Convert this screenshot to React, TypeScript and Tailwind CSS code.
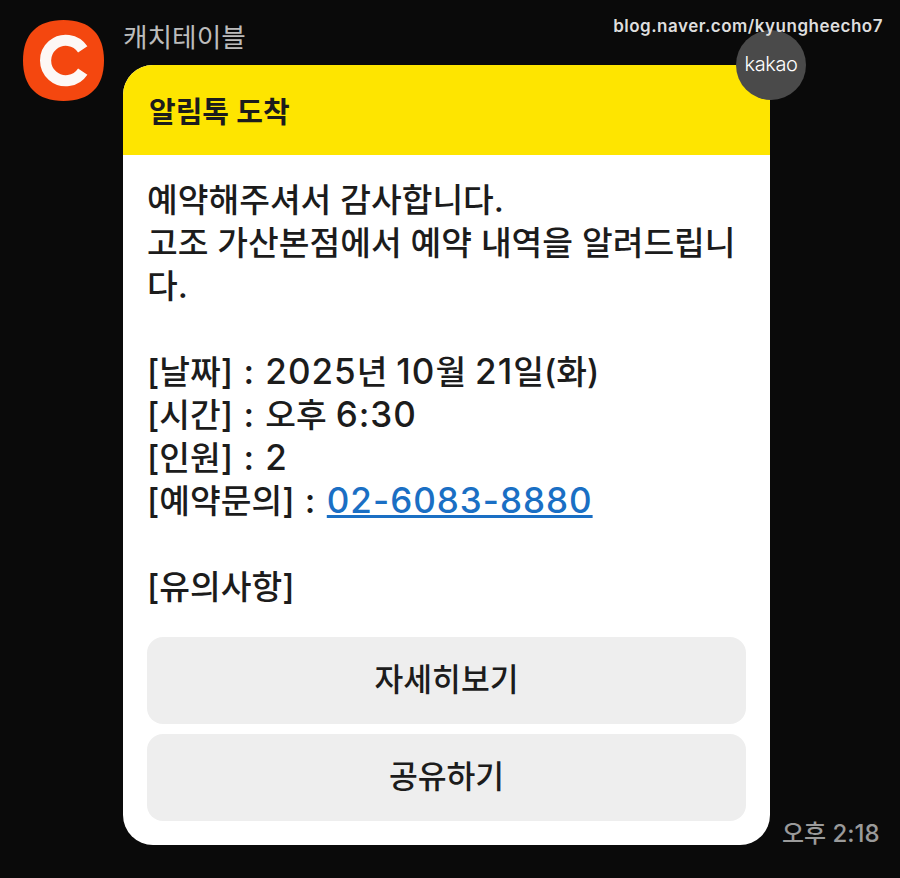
const font = "font-['Inter','Noto_Sans_CJK_KR',sans-serif]";

function Logo() {
  return (
    <svg width="81" height="81" viewBox="0 0 80 80" className="shrink-0">
      <path d="M40 0C66 0 80 14 80 40C80 66 66 80 40 80C14 80 0 66 0 40C0 14 14 0 40 0Z" fill="#f4470f" />
      <path d="M59 29A20 20 0 1 0 59 51" fill="none" stroke="#fdf8f5" strokeWidth="11" />
    </svg>
  );
}

// digits and latin run wider than the hangul in the source font
function Num({ children }: { children: React.ReactNode }) {
  return <span className="text-[35px] leading-none tracking-[1px]">{children}</span>;
}

export default function App() {
  return (
    <div className={`${font} relative h-[878px] w-[900px] overflow-hidden bg-[#0a0a0a]`}>
      {/* watermark */}
      <div className="absolute right-[17px] top-[16px] z-10 text-[17px] font-semibold leading-[21px] tracking-[0.5px] text-[#dedede]">
        blog.naver.com/kyungheecho7
      </div>
      <div className="flex items-start gap-[19px] pl-[23px] pt-5">
        <Logo />
        <div className="flex flex-col">
          <div className="h-[45px] text-[26.7px] leading-[34px] text-[#bcbcbc]">캐치테이블</div>
          <div className="flex items-end gap-3">
            <div className="relative w-[647px] rounded-[30px] bg-white">
              <div className="absolute right-[-36px] top-[-35px] flex h-[70px] w-[70px] items-center justify-center rounded-full bg-[#4a4a4a] pb-[2px] text-[20px] font-light tracking-[-0.4px] text-white">
                kakao
              </div>
              <div className="flex h-[90px] items-center rounded-t-[30px] bg-[#fee500] px-[26px] pt-[5px] text-[29px] font-semibold text-[#1c1c1c]">
                알림톡 도착
              </div>
              <div className="px-6 pb-6 pt-[24px]">
                <div className="h-[458px] text-[33.4px] font-medium leading-[43px] text-[#1c1c1c]">
                  <p>예약해주셔서 감사합니다.</p>
                  <p>고조 가산본점에서 예약 내역을 알려드립니</p>
                  <p>다.</p>
                  <p>&nbsp;</p>
                  <p>
                    [날짜]<Num> : 2025</Num>년 <Num>10</Num>월 <Num>21</Num>일(화)
                  </p>
                  <p>
                    [시간]<Num> : </Num>오후 <Num>6:30</Num>
                  </p>
                  <p>
                    [인원]<Num> : 2</Num>
                  </p>
                  <p>
                    [예약문의]<Num> : </Num>
                    <span className="text-[35px] leading-none tracking-[1px] text-[#1a6fc4] underline">02-6083-8880</span>
                  </p>
                  <p>&nbsp;</p>
                  <p>[유의사항]</p>
                </div>
                <div className="flex flex-col gap-[10px]">
                  <div className="flex h-[87px] items-center justify-center rounded-[16px] bg-[#eeeeee] text-[31.3px] font-medium text-[#1c1c1c]">
                    자세히보기
                  </div>
                  <div className="flex h-[87px] items-center justify-center rounded-[16px] bg-[#eeeeee] text-[31.3px] font-medium text-[#1c1c1c]">
                    공유하기
                  </div>
                </div>
              </div>
            </div>
            <div className="-mb-1 text-[24px] font-medium leading-[30px] text-[#9a9a9a]">오후 2:18</div>
          </div>
        </div>
      </div>
    </div>
  );
}
